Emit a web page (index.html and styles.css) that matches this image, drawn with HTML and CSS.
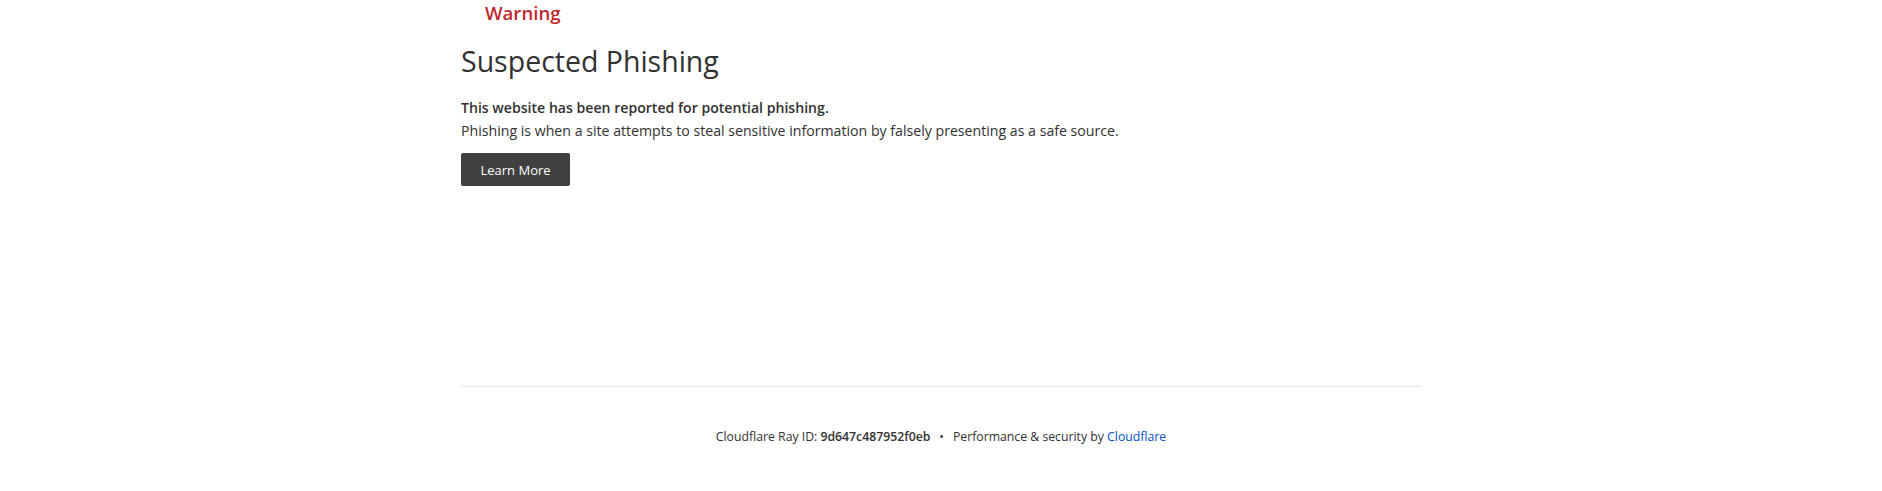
FILE: index.html
```html
<!DOCTYPE html>
<html lang="en">
<head>
<meta charset="utf-8">
<title>Suspected Phishing</title>
<link rel="stylesheet" href="styles.css">
</head>
<body>
<div class="page">
  <main class="main">
    <div class="warning">Warning</div>
    <h1 class="title">Suspected Phishing</h1>
    <p class="lead">This website has been reported for potential phishing.</p>
    <p class="desc">Phishing is when a site attempts to steal sensitive information by falsely presenting as a safe source.</p>
    <a class="btn" href="#">Learn More</a>
  </main>
  <footer class="footer">
    <div class="footer-line">
      <span>Cloudflare Ray ID: <strong class="ray">9d647c487952f0eb</strong></span>
      <span class="dot">•</span>
      <span>Performance &amp; security by <a class="cf-link" href="#">Cloudflare</a></span>
    </div>
  </footer>
</div>
</body>
</html>
```
FILE: styles.css
```css
html, body {
  margin: 0;
  padding: 0;
  background: #ffffff;
}
body {
  font-family: "Open Sans", "Noto Sans", "Liberation Sans", sans-serif;
  color: #313131;
}
.page {
  max-width: 960px;
  margin: 0 auto;
}
.main {
  display: flex;
  flex-direction: column;
  align-items: flex-start;
  padding-top: 1px;
  height: 385px;
  border-bottom: 1px solid #e8e8e8;
}
.warning {
  padding-left: 24px;
  font-size: 18.6px;
  line-height: 24px;
  font-weight: 600;
  color: #c0272d;
}
.title {
  margin: 18px 0 0;
  font-size: 28.5px;
  line-height: 36px;
  font-weight: 400;
  color: #313131;
}
.lead {
  margin: 17px 0 0;
  font-size: 14.1px;
  line-height: 23px;
  font-weight: 600;
}
.desc {
  margin: 0;
  font-size: 14.15px;
  line-height: 23px;
  font-weight: 400;
}
.btn {
  margin-top: 11px;
  display: inline-flex;
  align-items: center;
  justify-content: center;
  height: 33px;
  box-sizing: border-box;
  padding: 0 19.5px;
  background: #404040;
  color: #ffffff;
  border-radius: 2px;
  font-size: 13px;
  text-decoration: none;
}
.footer {
  padding-top: 41px;
  display: flex;
  justify-content: center;
}
.footer-line {
  display: flex;
  gap: 8px;
  font-size: 12.25px;
  line-height: 18px;
  color: #313131;
}
.ray {
  font-weight: 600;
}
.dot {
  padding: 0 1px;
}
.cf-link {
  color: #0051c3;
  text-decoration: none;
}
```
